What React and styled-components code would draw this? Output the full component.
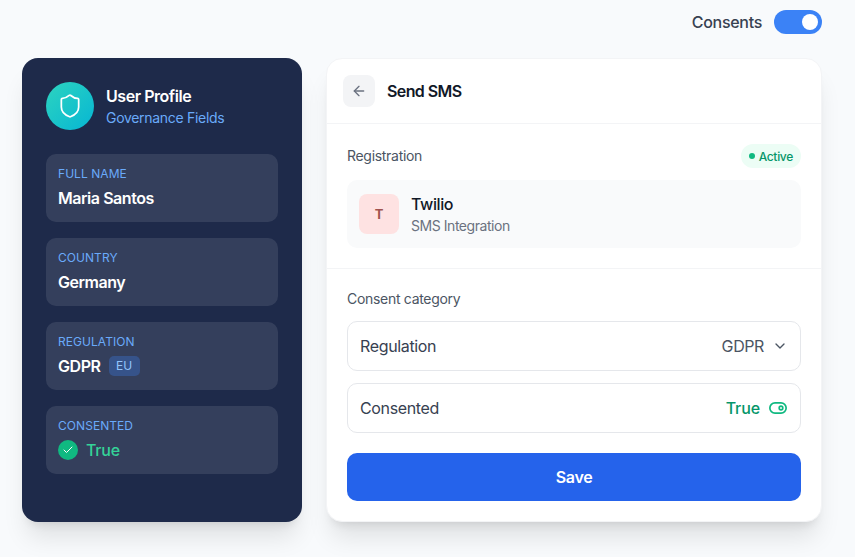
import React from "react";
import styled, { createGlobalStyle } from "styled-components";
import { ArrowLeft, ChevronDown, ShieldIcon, Check } from "lucide-react";

const Global = createGlobalStyle`
  html, body { margin: 0; padding: 0; }
  body { background: #f8fafc; font-family: Inter, "Liberation Sans", sans-serif; overflow: hidden; }
`;
const Page = styled.div`
  width: 855px; height: 557px; display: flex; flex-direction: column; box-sizing: border-box; padding: 10px 33px 35px 22px;
`;
const TopBar = styled.div`
  height: 24px; margin-bottom: 24px; display: flex; justify-content: flex-end; align-items: center; gap: 12px;
`;
const TopLabel = styled.span`font-size: 16px; letter-spacing: -.3px; font-weight: 500; color: #374151;`;
const Toggle = styled.div`
  width: 48px; height: 24px; border-radius: 12px; background: #3b82f6; position: relative;
  &::after { content: ""; position: absolute; top: 4px; right: 4px; width: 16px; height: 16px; border-radius: 50%; background: #fff; }
`;
const Main = styled.div`flex: 1; display: flex; gap: 24px;`;
const Profile = styled.aside`
  width: 280px; box-sizing: border-box; padding: 24px; background: #1e2a4a; border-radius: 16px;
  box-shadow: 0 20px 25px -5px rgba(0,0,0,.1), 0 8px 10px -6px rgba(0,0,0,.1);
  display: flex; flex-direction: column;
`;
const ProfileHead = styled.div`display: flex; align-items: center; gap: 12px; margin-bottom: 24px;`;
const Avatar = styled.div`
  width: 48px; height: 48px; border-radius: 50%; background: linear-gradient(135deg, #2dd4bf, #06b6d4);
  display: flex; align-items: center; justify-content: center; color: #fff;
`;
const ProfileTitle = styled.div`font-size: 16px; letter-spacing: -.45px; line-height: 24px; font-weight: 600; color: #fff;`;
const ProfileSub = styled.div`font-size: 14px; letter-spacing: -.3px; line-height: 20px; color: #6aaafa;`;
const Fields = styled.div`display: flex; flex-direction: column; gap: 16px;`;
const Field = styled.div`
  height: 68px; box-sizing: border-box; padding: 12px; border-radius: 10px; background: rgba(255,255,255,.1);
`;
const FieldLabel = styled.div`font-size: 12px; line-height: 16px; font-weight: 400; letter-spacing: .05px; color: #6aaafa; text-transform: uppercase; margin-bottom: 4px;`;
const FieldValue = styled.div`
  font-size: 16px; line-height: 24px; font-weight: 600; letter-spacing: -.45px; color: ${p => p.$green ? "#34d399" : "#fff"};
  display: flex; align-items: center; gap: 8px;
`;
const TrueText = styled.span`font-weight: 500; letter-spacing: -.2px;`;
const Tag = styled.span`
  font-size: 12px; line-height: 16px; font-weight: 400; letter-spacing: 0; color: #93c5fd; background: rgba(59,130,246,.3);
  padding: 2px 7.5px; border-radius: 5px;
`;
const CheckDot = styled.span`
  width: 20px; height: 20px; border-radius: 50%; background: #10b981; color: #fff;
  display: inline-flex; align-items: center; justify-content: center;
`;
const Panel = styled.section`
  flex: 1; box-sizing: border-box; background: #fff; border: 1px solid #f3f4f6; border-radius: 16px;
  box-shadow: 0 20px 25px -5px rgba(0,0,0,.1), 0 8px 10px -6px rgba(0,0,0,.1);
  display: flex; flex-direction: column;
`;
const PanelHead = styled.header`
  height: 65px; box-sizing: border-box; padding: 16px; display: flex; align-items: center; gap: 12px; border-bottom: 1px solid #f3f4f6;
`;
const BackBtn = styled.div`
  width: 32px; height: 32px; border-radius: 8px; background: #f3f4f6; color: #6b7280;
  display: flex; align-items: center; justify-content: center;
`;
const PanelTitle = styled.h1`margin: 0; font-size: 16px; letter-spacing: -.6px; line-height: 24px; font-weight: 600; color: #111827;`;
const Section = styled.div`
  padding: 20px; border-bottom: ${p => p.$last ? "none" : "1px solid #f3f4f6"};
`;
const RegRow = styled.div`display: flex; justify-content: space-between; align-items: center; height: 24px; margin-bottom: 12px;`;
const SectionLabel = styled.div`font-size: 14px; letter-spacing: -.3px; line-height: 20px; font-weight: 400; color: #4b5563;`;
const Badge = styled.span`
  display: inline-flex; align-items: center; gap: 4px; height: 24px; padding: 0 8px; border-radius: 12px;
  background: #ecfdf5; color: #059669; font-size: 12px; letter-spacing: -.3px; font-weight: 500;
`;
const Dot = styled.span`width: 6px; height: 6px; border-radius: 50%; background: #10b981;`;
const ProviderCard = styled.div`
  height: 68px; box-sizing: border-box; padding: 12px; display: flex; align-items: center; gap: 12px; background: #f9fafb; border-radius: 10px;
`;
const ProviderIcon = styled.div`
  width: 40px; height: 40px; border-radius: 8px; background: #fee2e2; color: #a0524e;
  display: flex; align-items: center; justify-content: center; font-size: 13px; font-weight: 700;
`;
const ProviderName = styled.div`font-size: 16px; letter-spacing: -.4px; line-height: 24px; font-weight: 500; color: #111827;`;
const ProviderSub = styled.div`font-size: 14px; letter-spacing: -.45px; line-height: 20px; color: #6b7280;`;
const CategoryLabel = styled(SectionLabel)`margin-bottom: 12px;`;
const Rows = styled.div`display: flex; flex-direction: column; gap: 12px; margin-bottom: 20px;`;
const Row = styled.div`
  height: 50px; box-sizing: border-box; padding: 0 12px; border: 1px solid #e5e7eb; border-radius: 10px;
  display: flex; align-items: center; justify-content: space-between;
`;
const RowLabel = styled.span`font-size: 16px; letter-spacing: -.35px; color: #374151;`;
const RowValue = styled.span`
  display: inline-flex; align-items: center; gap: 8px; font-size: 16px; letter-spacing: ${p => p.$green ? "-.1px" : "-.4px"}; color: ${p => p.$green ? "#059669" : "#4b5563"}; font-weight: ${p => p.$green ? 500 : 400};
`;
const Save = styled.button`
  width: 100%; height: 48px; border: 0; border-radius: 10px; background: #2563eb; color: #fff;
  font: 600 16px Inter, "Liberation Sans", sans-serif; letter-spacing: -.3px;
`;

const SmallToggle = () => (
  <svg width="20" height="20" viewBox="0 0 20 20" fill="none" stroke="#10b981" strokeWidth="1.7">
    <rect x="1.85" y="4.85" width="16.3" height="10.3" rx="5.15" />
    <circle cx="13" cy="10" r="1.8" />
  </svg>
);

const fields = [
  ["Full Name", "Maria Santos"],
  ["Country", "Germany"],
];

export default function App() {
  return (
    <Page>
      <Global />
      <TopBar>
        <TopLabel>Consents</TopLabel>
        <Toggle />
      </TopBar>
      <Main>
        <Profile>
          <ProfileHead>
            <Avatar><ShieldIcon size={26} strokeWidth={1.6} /></Avatar>
            <div>
              <ProfileTitle>User Profile</ProfileTitle>
              <ProfileSub>Governance Fields</ProfileSub>
            </div>
          </ProfileHead>
          <Fields>
            {fields.map(([l, v]) => (
              <Field key={l}>
                <FieldLabel>{l}</FieldLabel>
                <FieldValue>{v}</FieldValue>
              </Field>
            ))}
            <Field>
              <FieldLabel>Regulation</FieldLabel>
              <FieldValue>GDPR <Tag>EU</Tag></FieldValue>
            </Field>
            <Field>
              <FieldLabel>Consented</FieldLabel>
              <FieldValue $green>
                <CheckDot><Check size={12} strokeWidth={2} /></CheckDot>
                <TrueText>True</TrueText>
              </FieldValue>
            </Field>
          </Fields>
        </Profile>
        <Panel>
          <PanelHead>
            <BackBtn><ArrowLeft size={16} /></BackBtn>
            <PanelTitle>Send SMS</PanelTitle>
          </PanelHead>
          <Section>
            <RegRow>
              <SectionLabel>Registration</SectionLabel>
              <Badge><Dot />Active</Badge>
            </RegRow>
            <ProviderCard>
              <ProviderIcon>T</ProviderIcon>
              <div>
                <ProviderName>Twilio</ProviderName>
                <ProviderSub>SMS Integration</ProviderSub>
              </div>
            </ProviderCard>
          </Section>
          <Section $last>
            <CategoryLabel>Consent category</CategoryLabel>
            <Rows>
              <Row>
                <RowLabel>Regulation</RowLabel>
                <RowValue>GDPR <ChevronDown size={16} /></RowValue>
              </Row>
              <Row>
                <RowLabel>Consented</RowLabel>
                <RowValue $green>True <SmallToggle /></RowValue>
              </Row>
            </Rows>
            <Save>Save</Save>
          </Section>
        </Panel>
      </Main>
    </Page>
  );
}
